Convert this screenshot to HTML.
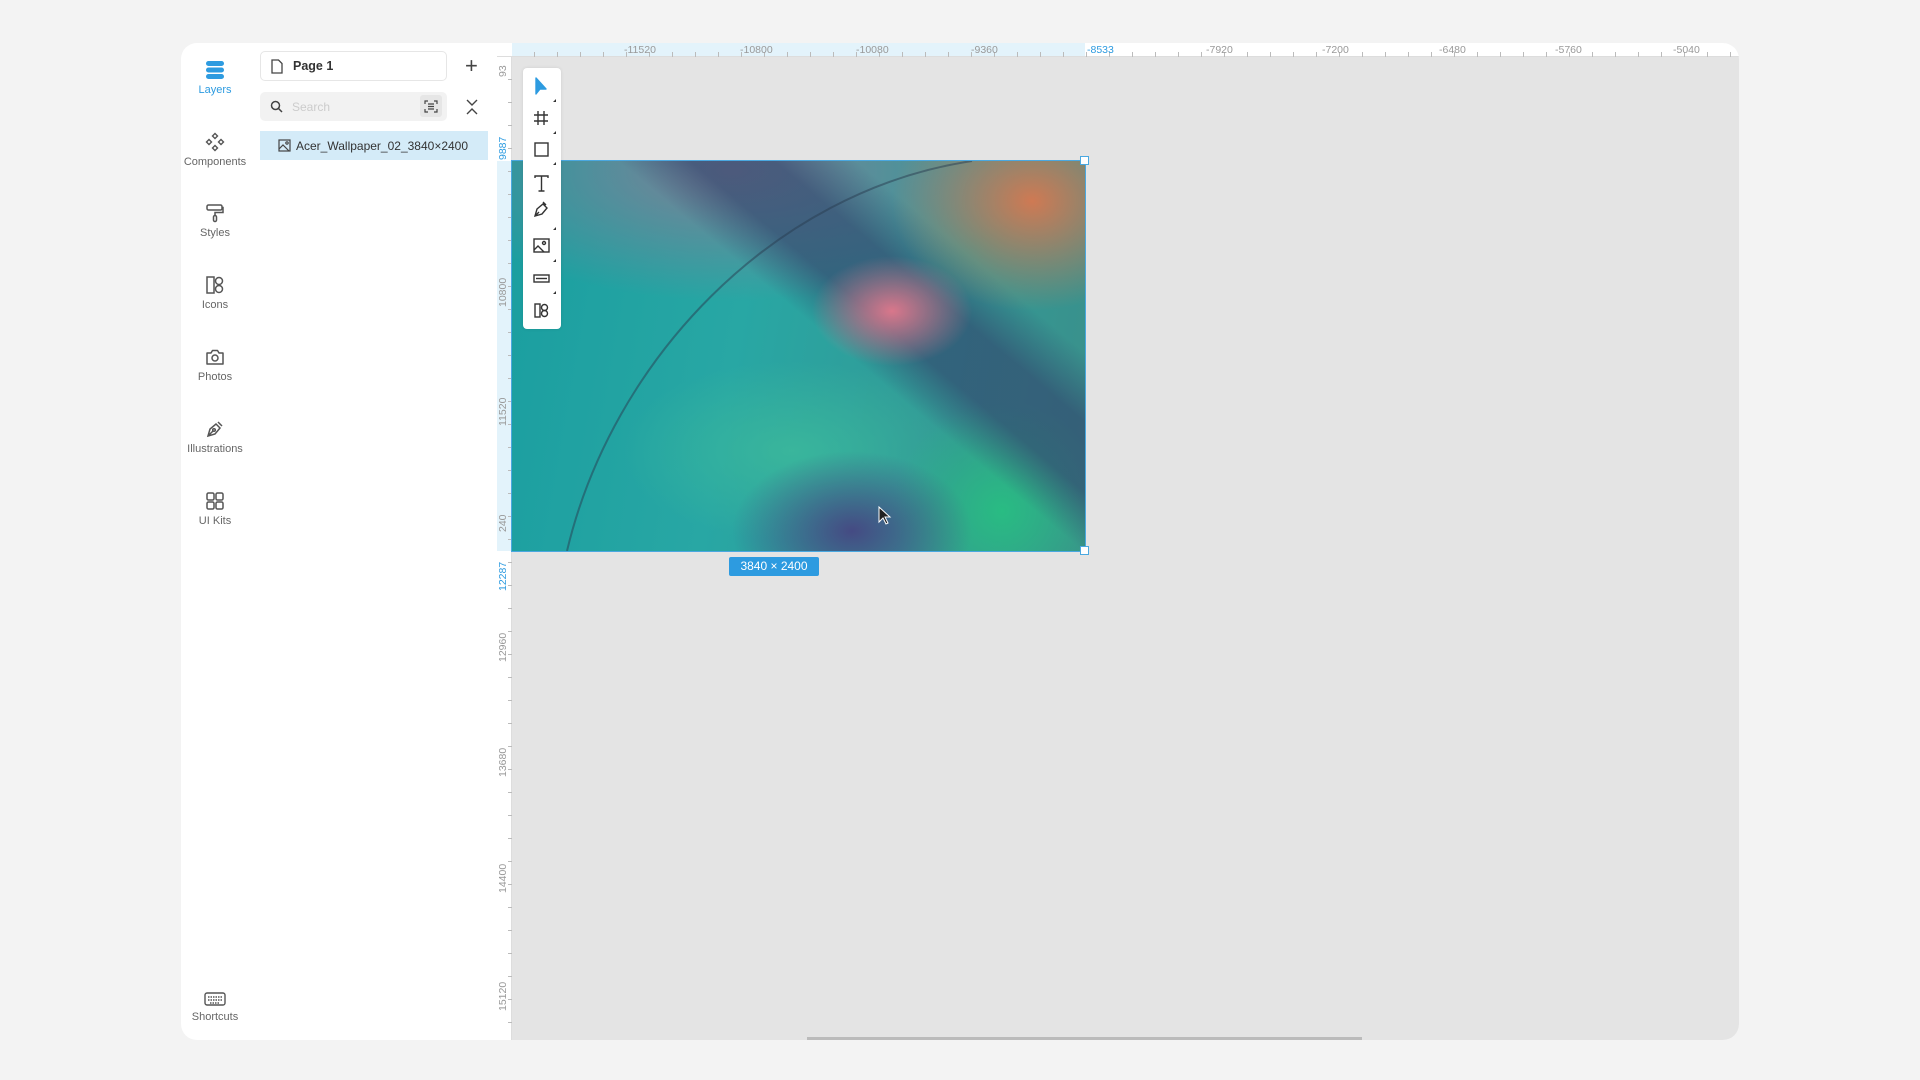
<!DOCTYPE html>
<html><head><meta charset="utf-8"><style>
*{margin:0;padding:0;box-sizing:border-box}
body{width:1920px;height:1080px;background:#f3f3f3;font-family:"Liberation Sans",sans-serif;position:relative;overflow:hidden}
.card{position:absolute;left:181px;top:43px;width:1558px;height:997px;background:#fff;border-radius:16px;overflow:hidden}
.canvas{position:absolute;left:331px;top:0;right:0;bottom:0;background:#e4e4e4}
.nav{position:absolute;left:0;width:68px;text-align:center;font-size:11px;color:#666}
.nav svg{display:block;margin:0 auto 4px}
.abs{position:absolute}
.rl{position:absolute;font-size:10.5px;color:#999;top:1px}
.vl{position:absolute;font-size:10.5px;color:#999;transform:rotate(-90deg);transform-origin:left top;left:316px}
</style></head><body>
<div class="card">
 <div class="nav" style="top:17px;color:#2d9be0"><svg width="20" height="20" viewBox="0 0 20 20"><rect x="1" y="1" width="18" height="5" rx="2.5" fill="#2d9be0"/><rect x="1" y="7.5" width="18" height="5" rx="2.5" fill="#2d9be0"/><rect x="1" y="14" width="18" height="5" rx="2.5" fill="#2d9be0"/></svg>Layers</div>
 <div class="nav" style="top:89px"><svg width="20" height="20" viewBox="0 0 20 20" fill="none" stroke="#555" stroke-width="1.4"><path d="M10 1.5l2.5 2.5L10 6.5 7.5 4zM10 13.5l2.5 2.5L10 18.5 7.5 16zM4 7.5l2.5 2.5L4 12.5 1.5 10zM16 7.5l2.5 2.5L16 12.5 13.5 10z"/></svg>Components</div>
 <div class="nav" style="top:160px"><svg width="20" height="20" viewBox="0 0 20 20" fill="none" stroke="#555" stroke-width="1.5"><rect x="2" y="2" width="15" height="5" rx="1.5"/><path d="M17 4.5h1v5H10v3"/><rect x="8.5" y="12.5" width="3" height="6" rx="1.5"/></svg>Styles</div>
 <div class="nav" style="top:232px"><svg width="20" height="20" viewBox="0 0 20 20" fill="none" stroke="#555" stroke-width="1.5"><rect x="2" y="2" width="7" height="16"/><circle cx="14" cy="6" r="3.5"/><circle cx="14" cy="14" r="3.5"/></svg>Icons</div>
 <div class="nav" style="top:304px"><svg width="20" height="20" viewBox="0 0 20 20" fill="none" stroke="#555" stroke-width="1.5"><path d="M2 6h4l1.5-2.5h5L14 6h4v11H2z" stroke-linejoin="round"/><circle cx="10" cy="11" r="3"/></svg>Photos</div>
 <div class="nav" style="top:376px"><svg width="20" height="20" viewBox="0 0 20 20" fill="none" stroke="#555" stroke-width="1.5"><path d="M3 17l2-7 6-5 4 4-5 6zM3 17l5-5M13 3l4 4"/><circle cx="9" cy="11" r="1.3"/></svg>Illustrations</div>
 <div class="nav" style="top:448px"><svg width="20" height="20" viewBox="0 0 20 20" fill="none" stroke="#555" stroke-width="1.5"><rect x="2" y="2" width="7" height="7" rx="1.5"/><rect x="11" y="2" width="7" height="7" rx="1.5"/><rect x="2" y="11" width="7" height="7" rx="1.5"/><rect x="11" y="11" width="7" height="7" rx="1.5"/></svg>UI Kits</div>
 <div class="nav" style="top:948px"><svg width="22" height="16" viewBox="0 0 22 16" fill="none" stroke="#555" stroke-width="1.4"><rect x="1" y="2" width="20" height="12" rx="2"/><path d="M4 6h14M4 9h14M6 12h10" stroke-dasharray="1.5 1"/></svg>Shortcuts</div>

 <div class="abs" style="left:79px;top:8px;width:187px;height:30px;border:1px solid #e6e6e6;border-radius:5px;font-size:12.5px;font-weight:bold;color:#333;padding:7px 0 0 32px">Page 1
  <svg class="abs" style="left:10px;top:7px" width="12" height="15" viewBox="0 0 12 15" fill="none" stroke="#444" stroke-width="1.3"><path d="M1 1h6.5L11 4.5V14H1z"/></svg></div>
 <div class="abs" style="left:284px;top:10px;font-size:22px;color:#444;font-weight:300">+</div>
 <div class="abs" style="left:79px;top:49px;width:187px;height:29px;background:#f2f2f2;border-radius:5px;font-size:12px;color:#ccc;padding:8px 0 0 32px">Search
  <svg class="abs" style="left:10px;top:8px" width="13" height="13" viewBox="0 0 13 13" fill="none" stroke="#444" stroke-width="1.5"><circle cx="5.5" cy="5.5" r="4"/><path d="M8.5 8.5l3.5 3.5"/></svg>
  <div class="abs" style="left:160px;top:3px;width:22px;height:22px;background:#e6e6e6;border-radius:3px"></div>
  <svg class="abs" style="left:164px;top:8px" width="14" height="13" viewBox="0 0 14 13" fill="none" stroke="#444" stroke-width="1.2"><path d="M1 4V1h3M10 1h3v3M13 9v3h-3M4 12H1V9M4 4h6M4 6.5h6M4 9h6"/></svg>
 </div>
 <svg class="abs" style="left:284px;top:55px" width="14" height="18" viewBox="0 0 14 18" fill="none" stroke="#444" stroke-width="1.4"><path d="M2 2l5 5 5-5M2 16l5-5 5 5"/></svg>
 <div class="abs" style="left:79px;top:88px;width:228px;height:29px;background:#d4ebf8;font-size:12px;color:#333;padding:8px 0 0 36px">Acer_Wallpaper_02_3840×2400
  <svg class="abs" style="left:18px;top:8px" width="13" height="13" viewBox="0 0 13 13" fill="none" stroke="#444" stroke-width="1.2"><rect x="1" y="1" width="11" height="11"/><path d="M1 10l4-4 6 6"/><circle cx="9" cy="4" r="1.2"/></svg></div>

 <div class="canvas"></div>
 <div class="abs" style="left:316px;top:0;right:0;height:14px;background:#fff;border-bottom:1px solid #ddd"></div>
 <div class="abs" style="left:331px;top:0;width:573px;height:14px;background:#e3f3fb;border-bottom:1px solid #ddd"></div>
 <div class="abs" style="left:331px;top:9px;right:0;height:5px;background:repeating-linear-gradient(90deg,transparent 0 22px,#bbb 22px 23px)"></div>
 <div class="rl" style="left:443px">-11520</div><div class="rl" style="left:559px">-10800</div><div class="rl" style="left:675px">-10080</div><div class="rl" style="left:790px">-9360</div><div class="rl" style="left:906px;color:#2d9be0">-8533</div><div class="rl" style="left:1025px">-7920</div><div class="rl" style="left:1141px">-7200</div><div class="rl" style="left:1258px">-6480</div><div class="rl" style="left:1374px">-5760</div><div class="rl" style="left:1492px">-5040</div>
 <div class="abs" style="left:316px;top:14px;width:15px;bottom:0;background:#fff;border-right:1px solid #ddd"></div>
 <div class="abs" style="left:316px;top:118px;width:15px;height:390px;background:#e3f3fb;border-right:1px solid #ddd"></div>
 <div class="abs" style="left:327px;top:14px;width:4px;bottom:0;background:repeating-linear-gradient(180deg,transparent 0 22px,#bbb 22px 23px)"></div>
 <div class="vl" style="top:34px">93</div><div class="vl" style="top:117px;color:#2d9be0">9887</div><div class="vl" style="top:264px">10800</div><div class="vl" style="top:383px">11520</div><div class="vl" style="top:489px">240</div><div class="vl" style="top:548px;color:#2d9be0">12287</div><div class="vl" style="top:619px">12960</div><div class="vl" style="top:734px">13680</div><div class="vl" style="top:850px">14400</div><div class="vl" style="top:968px">15120</div>

 <div class="abs" style="left:331px;top:118px;width:573px;height:390px;outline:1px solid #4aa8e0;overflow:hidden;
 background:
 radial-gradient(ellipse 80px 55px at 380px 150px,rgba(226,120,140,.95),transparent),
 radial-gradient(ellipse 140px 110px at 520px 40px,rgba(215,120,80,.95),transparent),
 linear-gradient(40deg,transparent 0 55%,rgba(50,70,110,.65) 62% 70%,transparent 78%),
 radial-gradient(ellipse 120px 80px at 340px 370px,rgba(70,70,130,.95),transparent),
 radial-gradient(ellipse 110px 110px at 490px 350px,rgba(40,190,130,.95),transparent),
 radial-gradient(ellipse 170px 90px at 280px 290px,rgba(60,185,155,.85),transparent),
 radial-gradient(ellipse 300px 130px at 220px 10px,rgba(130,125,150,.95),transparent),
 linear-gradient(100deg,#1a9ea0 0%,#28a7a4 40%,#3b8f8a 100%)"></div>
 <svg class="abs" style="left:331px;top:118px" width="573" height="390"><path d="M55 390 C100 200 260 30 460 0" fill="none" stroke="rgba(40,60,80,.5)" stroke-width="2"/></svg>
 <div class="abs" style="left:899px;top:113px;width:9px;height:9px;background:#fff;border:1px solid #4aa8e0"></div>
 <div class="abs" style="left:899px;top:503px;width:9px;height:9px;background:#fff;border:1px solid #4aa8e0"></div>
 <div class="abs" style="left:548px;top:514px;width:90px;height:19px;background:#2d9be0;color:#fff;font-size:12px;text-align:center;line-height:19px;border-radius:2px">3840 × 2400</div>
 <svg class="abs" style="left:697px;top:463px" width="14" height="20" viewBox="0 0 14 20"><path d="M1 1v15l4-4 3 6 2-1-3-6h5z" fill="#222" stroke="#fff" stroke-width="1"/></svg>

 <div class="abs" style="left:342px;top:25px;width:38px;height:261px;background:#fff;border-radius:4px;box-shadow:0 0 3px rgba(0,0,0,.1)"></div>
 <svg class="abs" style="left:342px;top:25px" width="38" height="261" viewBox="0 0 38 261" fill="none" stroke="#333" stroke-width="1.4">
  <path d="M13 10v16l4-5 6 0z" fill="#2d9be0" stroke="#2d9be0" stroke-linejoin="round"/>
  <path d="M15 43v14M21 43v14M11 47h14M11 53h14"/>
  <rect x="12" y="75" width="13" height="13"/>
  <path d="M12 110v-2h13v2M18.5 108v15M15.5 123h6"/>
  <path d="M12 148l2-7 6-5 4 4-5 6zM12 148l4-4M20 134l3 3"/>
  <rect x="11" y="171" width="15" height="13"/><path d="M11 182l4-4 6 6"/><circle cx="21" cy="175" r="1.5"/>
  <rect x="11" y="207" width="15" height="7"/><path d="M13 210.5h11"/>
  <rect x="12" y="236" width="5" height="13"/><circle cx="21.5" cy="239.5" r="3"/><circle cx="21.5" cy="245.5" r="3"/>
  <g fill="#333" stroke="none"><path d="M33 34h-3l3-3zM33 66h-3l3-3zM33 97h-3l3-3zM33 162h-3l3-3zM33 194h-3l3-3zM33 226h-3l3-3z"/></g>
 </svg>
 <div class="abs" style="left:626px;top:994px;width:555px;height:3px;background:#bbb"></div>
</div>
</body></html>
